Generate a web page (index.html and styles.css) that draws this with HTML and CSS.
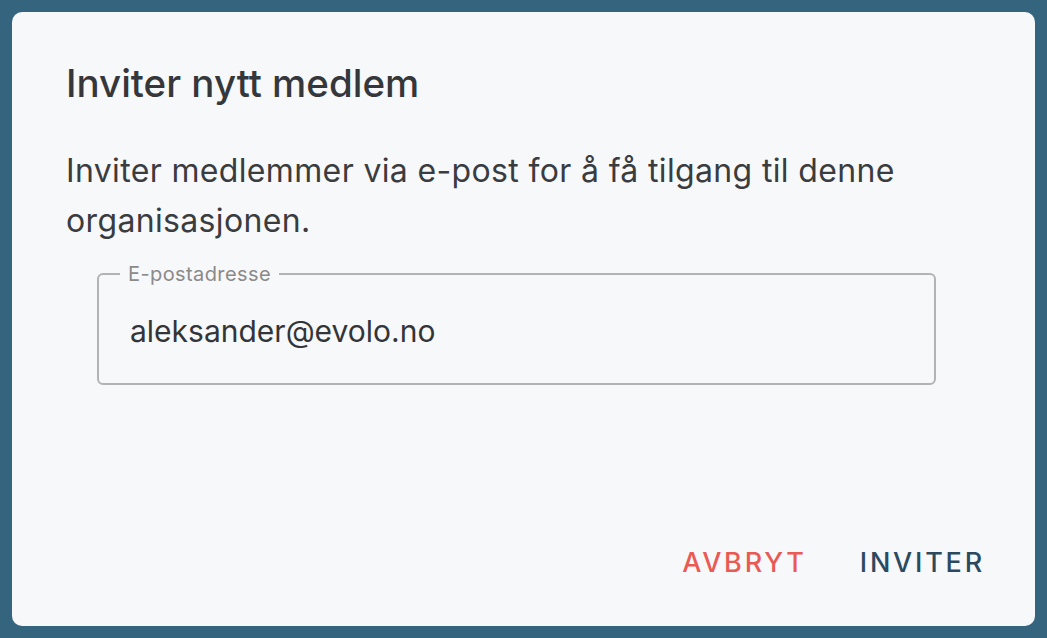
FILE: index.html
```html
<!DOCTYPE html>
<html>
<head>
  <title>Inviter nytt medlem</title>
  <link rel="stylesheet" href="styles.css">
</head>
<body>
<div class="dialog">
  <h2 class="dialog-title">Inviter nytt medlem</h2>
  <div class="dialog-content">
    <p class="dialog-text">Inviter medlemmer via e-post for å få tilgang til denne organisasjonen.</p>
    <fieldset class="field">
      <legend>E-postadresse</legend>
      <input type="email" value="aleksander@evolo.no">
    </fieldset>
  </div>
  <div class="dialog-actions">
    <button class="btn btn-cancel">Avbryt</button>
    <button class="btn btn-invite">Inviter</button>
  </div>
</div>
</body>
</html>
```

FILE: styles.css
```css
* {
  box-sizing: border-box;
}
body {
  margin: 0;
  padding: 12px;
  background-color: #35647e;
  font-family: Inter, "Noto Sans", sans-serif;
  color: #333538;
}
.dialog {
  display: flex;
  flex-direction: column;
  height: 614px;
  background-color: #f7f8fa;
  border-radius: 10px;
  padding: 39px 50px 47px 54px;
}
.dialog-title {
  margin: 0;
  font-size: 38.5px;
  font-weight: 500;
  line-height: 64px;
  color: #35373a;
}
.dialog-content {
  flex: 1;
  padding-top: 31px;
}
.dialog-text {
  margin: 0;
  font-size: 32px;
  line-height: 50px;
  letter-spacing: 0.35px;
  color: #3a3c3f;
}
.field {
  margin: 16px 49px 0 31px;
  padding: 0 31px;
  height: 123px;
  border: 2px solid #b3b3b3;
  border-radius: 6px;
}
.field legend {
  padding: 0 8px;
  margin-left: -10px;
  font-size: 20px;
  color: #8a8a8a;
  letter-spacing: 0.4px;
}
.field input {
  border: none;
  background: none;
  outline: none;
  width: 100%;
  padding: 27px 0 0 0;
  font-family: inherit;
  font-size: 30px;
  color: #333538;
}
.dialog-actions {
  display: flex;
  justify-content: flex-end;
  gap: 53px;
}
.btn {
  border: none;
  background: none;
  padding: 0;
  font-family: inherit;
  font-size: 27px;
  font-weight: 500;
  letter-spacing: 2.8px;
  text-transform: uppercase;
  cursor: pointer;
}
.btn-cancel {
  color: #ea5a55;
}
.btn-invite {
  color: #2b4a5f;
}
```
